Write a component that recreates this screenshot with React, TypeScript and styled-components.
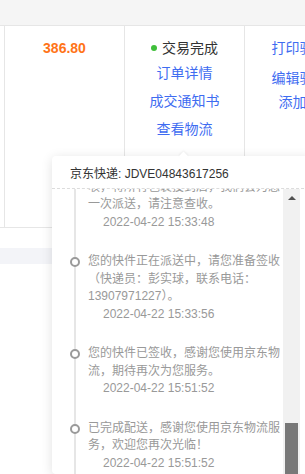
import styled, { createGlobalStyle } from 'styled-components';

const GlobalStyle = createGlobalStyle`
  html, body {
    margin: 0;
    padding: 0;
    overflow: hidden;
    background: #fff;
    font-family: "Liberation Sans", "Noto Sans CJK SC", sans-serif;
  }
`;

type Track = { text: string; time: string };

const TRACKS: Track[] = [
  {
    text: '您好，您的快件因客户不在家无法签收，将所有包裹投到后，我们会为您一次派送，请注意查收。',
    time: '2022-04-22 15:33:48',
  },
  {
    text: '您的快件正在派送中，请您准备签收（快递员：彭实球，联系电话：13907971227）。',
    time: '2022-04-22 15:33:56',
  },
  {
    text: '您的快件已签收，感谢您使用京东物流，期待再次为您服务。',
    time: '2022-04-22 15:51:52',
  },
  {
    text: '已完成配送，感谢您使用京东物流服务，欢迎您再次光临！',
    time: '2022-04-22 15:51:52',
  },
];

export default function App() {
  return (
    <Page>
      <GlobalStyle />
      <TopBand />
      <OrderRow>
        <LeadCell />
        <Cell width={120}>
          <Price>386.80</Price>
        </Cell>
        <Cell width={120}>
          <Status>
            <Dot />
            交易完成
          </Status>
          <Link gap={5}>订单详情</Link>
          <Link gap={8}>成交通知书</Link>
          <Link gap={8}>查看物流</Link>
        </Cell>
        <Cell width={124}>
          <Link gap={0}>打印验货单</Link>
          <Link gap={10}>编辑验货单</Link>
          <Link gap={4}>添加备注</Link>
        </Cell>
      </OrderRow>
      <Band />

      <Popover>
        <PopHeader>京东快递: JDVE04843617256</PopHeader>
        <PopBody>
          <Viewport>
            <Timeline>
              {TRACKS.map((t, i) => (
                <Item key={i}>
                  <Node />
                  <ItemText>
                    {t.text}
                    <Time>{t.time}</Time>
                  </ItemText>
                </Item>
              ))}
            </Timeline>
          </Viewport>
          <Scrollbar>
            <ArrowUp />
            <Thumb />
          </Scrollbar>
        </PopBody>
      </Popover>
    </Page>
  );
}

const Page = styled.div`
  position: relative;
  width: 305px;
  height: 474px;
  overflow: hidden;
`;

const TopBand = styled.div`
  height: 25px;
  background: #f5f5f5;
  border-bottom: 1px solid #e6e6e6;
`;

const OrderRow = styled.div`
  display: flex;
  height: 201px;
  border-bottom: 1px solid #e6e6e6;
`;

const LeadCell = styled.div`
  width: 4px;
  flex-shrink: 0;
`;

const Cell = styled.div<{ width: number }>`
  width: ${({ width }) => width}px;
  flex-shrink: 0;
  box-sizing: border-box;
  border-left: 1px solid #e6e6e6;
  display: flex;
  flex-direction: column;
  align-items: center;
  padding-top: 12px;
  font-size: 14px;
  line-height: 20px;
  white-space: nowrap;
`;

const Price = styled.div`
  color: #ff7418;
  font-weight: bold;
`;

const Status = styled.div`
  display: flex;
  align-items: center;
  color: #333;
`;

const Dot = styled.span`
  width: 6px;
  height: 6px;
  border-radius: 50%;
  background: #3fbf3a;
  margin-right: 5px;
`;

const Link = styled.div<{ gap: number }>`
  margin-top: ${({ gap }) => gap}px;
  color: #3e6cf1;
  cursor: pointer;
`;

const Band = styled.div`
  height: 16px;
  margin-top: 20px;
  background: #f3f4f8;
`;

const Popover = styled.div`
  position: absolute;
  left: 52px;
  top: 156px;
  width: 262px;
  background: #fff;
  border-radius: 4px;
  box-shadow: 0 2px 12px rgba(0, 0, 0, 0.12);
  font-size: 12px;

  &::before {
    content: '';
    position: absolute;
    left: 128px;
    top: -3px;
    width: 7px;
    height: 7px;
    background: #fff;
    transform: rotate(45deg);
    box-shadow: -1px -1px 2px rgba(0, 0, 0, 0.05);
  }
`;

const PopHeader = styled.div`
  position: relative;
  height: 32px;
  display: flex;
  align-items: center;
  padding: 0 18px;
  color: #333;
  border-bottom: 1px dashed #dcdcdc;
  white-space: nowrap;
`;

const PopBody = styled.div`
  display: flex;
  height: 285px;
`;

const Viewport = styled.div`
  width: 231px;
  flex-shrink: 0;
  overflow: hidden;
`;

const Timeline = styled.div`
  margin: -28px 0 0 22px;
  border-left: 2px solid #e6e6e6;
  padding-bottom: 40px;
`;

const Item = styled.div`
  display: flex;
  align-items: flex-start;
  margin-bottom: 22px;
`;

const Node = styled.span`
  flex-shrink: 0;
  width: 10px;
  height: 10px;
  box-sizing: border-box;
  border: 2px solid #9a9a9a;
  border-radius: 50%;
  background: #fff;
  margin: 4px 0 0 -6px;
`;

const ItemText = styled.div`
  width: 196px;
  margin-left: 8px;
  color: #999;
  line-height: 17.5px;
`;

const Time = styled.div`
  padding-left: 15px;
`;

const Scrollbar = styled.div`
  width: 17px;
  flex-shrink: 0;
  background: #f1f1f1;
  display: flex;
  flex-direction: column;
  align-items: center;
`;

const ArrowUp = styled.span`
  margin-top: 7px;
  width: 0;
  height: 0;
  border-left: 4px solid transparent;
  border-right: 4px solid transparent;
  border-bottom: 4px solid #505050;
`;

const Thumb = styled.span`
  margin-top: auto;
  width: 13px;
  height: 51px;
  background: #787878;
`;
